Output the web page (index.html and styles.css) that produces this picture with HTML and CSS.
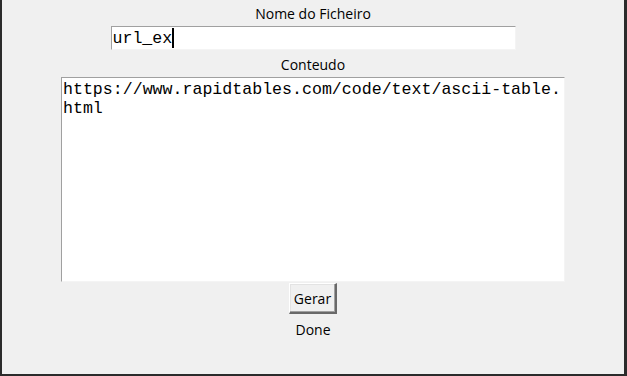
FILE: index.html
```html
<!DOCTYPE html>
<html>
<head>
  <title>Gerador</title>
  <link rel="stylesheet" href="styles.css">
</head>
<body>
  <div class="window">
    <div class="label label-top">Nome do Ficheiro</div>
    <div class="entry"><span>url_ex</span><span class="caret"></span></div>
    <div class="label label-mid">Conteudo</div>
    <textarea class="content" spellcheck="false">https://www.rapidtables.com/code/text/ascii-table.
html</textarea>
    <button class="btn" type="button">Gerar</button>
    <div class="label label-status">Done</div>
  </div>
</body>
</html>
```

FILE: styles.css
```css
html, body {
  margin: 0;
  height: 100%;
}

body {
  background-color: #f0f0f0;
  font-family: "Open Sans", sans-serif;
}

.window {
  box-sizing: border-box;
  height: 376px;
  display: flex;
  flex-direction: column;
  align-items: center;
  border-left: 2px solid #2b2b2b;
  border-right: 3px solid #2b2b2b;
  border-bottom: 2px solid #2b2b2b;
  background-color: #f0f0f0;
}

.label {
  font-size: 14px;
  color: #000;
  line-height: 20px;
}

.label-top {
  margin-top: 4px;
  height: 22px;
}

.label-mid {
  margin-top: 5px;
  height: 22px;
}

.label-status {
  margin-top: 6px;
}

.entry {
  box-sizing: border-box;
  width: 405px;
  height: 24px;
  background-color: #fff;
  border-top: 1px solid #a0a0a0;
  border-left: 1px solid #a0a0a0;
  border-right: 1px solid #f4f4f4;
  border-bottom: 1px solid #f4f4f4;
  padding-left: 1px;
  display: flex;
  align-items: center;
  font-family: "Liberation Mono", monospace;
  font-size: 16.6px;
  color: #000;
}

.caret {
  display: inline-block;
  width: 2px;
  height: 20px;
  background-color: #000;
}

.content {
  box-sizing: border-box;
  width: 504px;
  height: 205px;
  margin: 0;
  padding: 2px 1px;
  background-color: #fff;
  border-top: 1px solid #a0a0a0;
  border-left: 1px solid #a0a0a0;
  border-right: 1px solid #f4f4f4;
  border-bottom: 1px solid #f4f4f4;
  font-family: "Liberation Mono", monospace;
  font-size: 16.6px;
  line-height: 19px;
  color: #000;
  white-space: pre;
  overflow: hidden;
  resize: none;
  outline: none;
}

.btn {
  box-sizing: border-box;
  width: 48px;
  height: 31px;
  margin-top: 1px;
  padding: 0;
  font-family: "Open Sans", sans-serif;
  font-size: 14px;
  color: #000;
  background-color: #f0f0f0;
  border-top: 1px solid #fff;
  border-left: 1px solid #fff;
  border-right: 2px solid #696969;
  border-bottom: 2px solid #696969;
  box-shadow: inset -1px -1px 0 #a0a0a0, inset 1px 1px 0 #e3e3e3;
  cursor: pointer;
}
```
